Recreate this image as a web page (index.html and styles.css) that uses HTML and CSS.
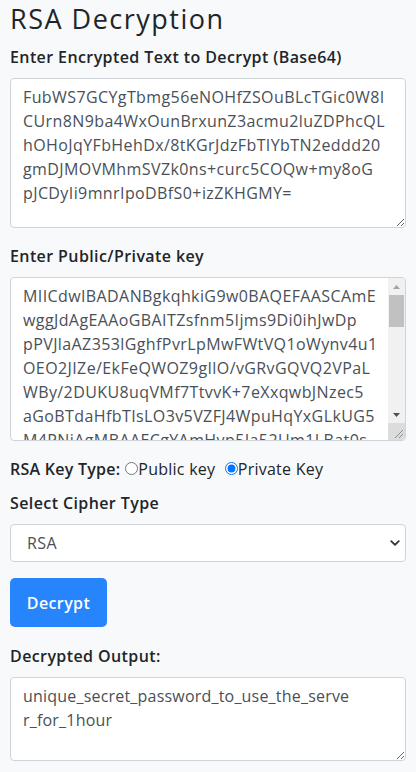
FILE: index.html
```html
<!DOCTYPE html>
<html lang="en">
<head>
<meta charset="utf-8">
<title>RSA Decryption</title>
<link rel="stylesheet" href="styles.css">
</head>
<body>
<div class="page">
  <h2 class="title">RSA Decryption</h2>

  <div class="group">
    <label class="lbl" for="enc">Enter Encrypted Text to Decrypt (Base64)</label>
    <textarea id="enc" class="field area area-enc" wrap="off">FubWS7GCYgTbmg56eNOHfZSOuBLcTGic0W8I
CUrn8N9ba4WxOunBrxunZ3acmu2luZDPhcQL
hOHoJqYFbHehDx/8tKGrJdzFbTIYbTN2eddd20
gmDJMOVMhmSVZk0ns+curc5COQw+my8oG
pJCDyIi9mnrIpoDBfS0+izZKHGMY=</textarea>
  </div>

  <div class="group">
    <label class="lbl" for="key">Enter Public/Private key</label>
    <div class="scroll-wrap">
      <textarea id="key" class="field area area-key" wrap="off">MIICdwIBADANBgkqhkiG9w0BAQEFAASCAmE
wggJdAgEAAoGBAITZsfnm5Ijms9Di0ihJwDp
pPVJlaAZ353lGghfPvrLpMwFWtVQ1oWynv4u1
OEO2JIZe/EkFeQWOZ9gIlO/vGRvGQVQ2VPaL
WBy/2DUKU8uqVMf7TtvvK+7eXxqwbJNzec5
aGoBTdaHfbTIsLO3v5VZFJ4WpuHqYxGLkUG5
M4PNiAgMBAAECgYAmHyp5Ia52Um1LBat0s
Qk3vXzR8aTq1mP0nWcY7dGhE2uLsB9fKjo
Vt4xNq6ZpR1yHcA8wEeLm3sDgUoI5bTfK2
nQzh7JxW0vYcPa9dMr4sKtLgE6uBoH1Fi
X3mNqS8cVwR2aTyZk5pLhDgJ0eUo7bIfE4
Gd1sPz9KqMvWn6RtYcHxLa3jEbU8oNiF2
y7TgVh0cQpLdA4sZkWmR9xEnJbU1oIuF5
P2vKqH8rNtYs3dMwGcLe6aZbXj0oUiB7f
L9dXpQm4sNzA1tRwEyKc8hVg2bJoUf3Hi
W6eRzTq0nMvY5aPkSdLc7xGb1hUjF8oIt
k4CmNsQ2rXvZ9pTyLdHaE6wKb3gUjo0Fi
R7fYtQ8nVcM1aPzKsDxLe5hWg2bUjo9iH
c3NqSvZ0mTrY8aPkLdWx4eGb6hUj1oFiE
Z5tKqN2rVsM7aPdYwLcHe9xGb0bUjoF8i
CQQDx8yZ5nKq3mP0=</textarea>
      <div class="vscroll" aria-hidden="true">
        <div class="sb-btn"><svg width="7" height="4" viewBox="0 0 7 4"><polygon points="0,4 3.5,0 7,4" fill="#a3a3a3"/></svg></div>
        <div class="sb-track"><div class="sb-thumb"></div></div>
        <div class="sb-btn"><svg width="7" height="4" viewBox="0 0 7 4"><polygon points="0,0 7,0 3.5,4" fill="#505050"/></svg></div>
        <div class="sb-corner"><svg width="17" height="17" viewBox="0 0 17 17"><path d="M7 15L15 7M11 15L15 11" stroke="#8a8a8a" stroke-width="1"/></svg></div>
      </div>
    </div>
  </div>

  <div class="keytype">
    <span class="lbl-inline">RSA Key Type:</span><input type="radio" name="kt" id="pub" class="radio"><label for="pub" class="opt">Public key</label>
    <input type="radio" name="kt" id="priv" class="radio" checked><label for="priv" class="opt">Private Key</label>
  </div>

  <div class="group group-select">
    <label class="lbl" for="cipher">Select Cipher Type</label>
    <div class="select-wrap">
      <select id="cipher" class="field select"><option>RSA</option></select>
      <svg class="chev" width="10" height="10" viewBox="0 0 16 16" aria-hidden="true"><path d="M2 5l6 6 6-6" fill="none" stroke="#343a40" stroke-width="3" stroke-linecap="round" stroke-linejoin="round"/></svg>
    </div>
  </div>

  <button class="btn" type="button">Decrypt</button>

  <div class="group group-out">
    <label class="lbl" for="out">Decrypted Output:</label>
    <textarea id="out" class="field area area-out" wrap="off">unique_secret_password_to_use_the_serve
r_for_1hour</textarea>
  </div>
</div>
</body>
</html>
```

FILE: styles.css
```css
* { box-sizing: border-box; }

html, body {
  margin: 0;
  padding: 0;
  background: #f8f9fa;
}

body {
  font-family: "Open Sans", "Noto Sans", sans-serif;
  color: #212529;
  font-size: 16px;
  line-height: 24px;
  letter-spacing: 0.4px;
}

.page {
  padding: 0 10px;
  display: flex;
  flex-direction: column;
}

.title {
  margin: 0 0 8px;
  font-size: 27px;
  line-height: 37px;
  font-weight: 500;
  letter-spacing: 1.5px;
  color: #212529;
}

.group {
  display: flex;
  flex-direction: column;
  margin-bottom: 16px;
}

.lbl {
  display: block;
  font-weight: 600;
  font-size: 16px;
  line-height: 24px;
  margin-bottom: 9px;
}

.field {
  font-family: "Open Sans", "Noto Sans", sans-serif;
  font-size: 16px;
  line-height: 24px;
  letter-spacing: 0.4px;
  color: #495057;
  background: #fff;
  border: 1px solid #ced4da;
  border-radius: 4px;
  width: 100%;
  margin: 0;
}

.area {
  display: block;
  padding: 6px 12px;
  resize: vertical;
  overflow: hidden;
}

.area-enc { height: 150px; }
.area-key { height: 164px; padding-right: 29px; }
.area-out { height: 84px; letter-spacing: 0.2px; }

.scroll-wrap {
  position: relative;
}

.vscroll {
  position: absolute;
  top: 1px;
  right: 1px;
  bottom: 1px;
  width: 17px;
  display: flex;
  flex-direction: column;
  background: #f1f1f1;
  border-radius: 0 3px 3px 0;
  overflow: hidden;
}

.sb-btn {
  height: 17px;
  display: flex;
  align-items: center;
  justify-content: center;
}

.sb-track {
  flex: 1;
  display: flex;
  flex-direction: column;
  padding: 0 1px;
}

.sb-thumb {
  height: 32px;
  background: #c1c1c1;
}

.sb-corner {
  height: 17px;
  background: #dcdcdc;
  display: flex;
}

.keytype {
  font-size: 16px;
  line-height: 24px;
  letter-spacing: 0.25px;
  margin-bottom: 10px;
}

.lbl-inline {
  font-weight: 600;
}

.radio {
  width: 13px;
  height: 13px;
  margin: 3px 0 0 5px;
  vertical-align: baseline;
}

.opt {
  font-weight: 400;
  color: #212529;
}

.select-wrap {
  position: relative;
}

.select {
  display: block;
  height: 38px;
  padding: 0 30px 0 16px;
  -webkit-appearance: none;
  appearance: none;
  color: #495057;
}

.chev {
  position: absolute;
  right: 6px;
  top: 50%;
  transform: translateY(-50%);
  pointer-events: none;
}

.btn {
  align-self: flex-start;
  width: 97px;
  height: 49px;
  padding: 0;
  margin: 0 0 17px;
  background: #2684fc;
  color: #fff;
  border: none;
  border-radius: 5px;
  font-family: "Open Sans", "Noto Sans", sans-serif;
  font-size: 16px;
  letter-spacing: 0.4px;
  font-weight: 600;
}
```
